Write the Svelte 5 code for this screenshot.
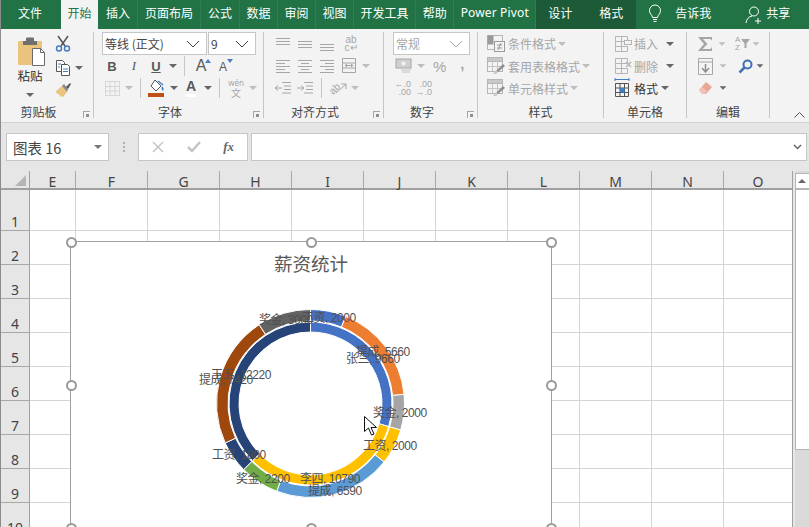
<script>
  const tabs = ["插入", "页面布局", "公式", "数据", "审阅", "视图", "开发工具", "帮助", "Power Pivot"];
  const cols = [["E", 46], ["F", 72], ["G", 72], ["H", 72], ["I", 72], ["J", 72], ["K", 72], ["L", 72], ["M", 72], ["N", 72], ["O", 68]];
  const rows = [41, 34, 34, 34, 34, 34, 34, 34, 34, 34];

  const total = 32670;
  const inner = [
    [9660, "#4472c4"],
    [10790, "#ffc000"],
    [12220, "#264478"],
  ];
  const outer = [
    [2000, "#4472c4"],
    [5660, "#ed7d31"],
    [2000, "#a5a5a5"],
    [2000, "#ffc000"],
    [6590, "#5b9bd5"],
    [2200, "#70ad47"],
    [1800, "#264478"],
    [7420, "#9e480e"],
    [3000, "#636363"],
  ];
  const labels = [
    ["工资, 2000", 231, 75],
    ["奖金, 3000", 188, 77],
    ["提成, 5660", 285, 109],
    ["张三, 9660", 275, 116],
    ["王五, 12220", 140, 132],
    ["提成, 7420", 128, 137],
    ["奖金, 2000", 302, 170],
    ["工资, 2000", 292, 203],
    ["工资, 1800", 141, 212],
    ["奖金, 2200", 165, 236],
    ["李四, 10790", 229, 236],
    ["提成, 6590", 237, 248],
  ];
  const cx = 239.5;
  const cy = 161.5;

  function point(r, a) {
    const t = (a / total) * Math.PI * 2;
    return (cx + r * Math.sin(t)).toFixed(2) + " " + (cy - r * Math.cos(t)).toFixed(2);
  }

  function ring(data, r0, r1) {
    let sum = 0;
    return data.map(([v, color]) => {
      const a0 = sum;
      sum += v;
      const big = v / total > 0.5 ? 1 : 0;
      const d = `M${point(r1, a0)}A${r1} ${r1} 0 ${big} 1 ${point(r1, sum)}L${point(r0, sum)}A${r0} ${r0} 0 ${big} 0 ${point(r0, a0)}Z`;
      return { d, color };
    });
  }

  const arcs = [...ring(inner, 71.5, 81.5), ...ring(outer, 82.5, 94)];
  const handles = [[0, 0], [50, 0], [100, 0], [0, 50], [100, 50], [0, 100], [50, 100], [100, 100]];

  const topAlign = [[1, 15, 2], [1, 15, 5], [1, 15, 8]];
  const midAlign = [[1, 15, 5], [1, 15, 8], [1, 15, 11]];
  const botAlign = [[1, 15, 8], [1, 15, 11], [1, 15, 14]];
  const leftAlign = [[1, 15, 2], [1, 10, 5], [1, 15, 8], [1, 10, 11], [1, 15, 14]];
  const centerAlign = [[1, 15, 2], [4, 12, 5], [1, 15, 8], [4, 12, 11], [1, 15, 14]];
  const rightAlign = [[1, 15, 2], [6, 15, 5], [1, 15, 8], [6, 15, 11], [1, 15, 14]];
</script>

{#snippet lines(items)}
  <svg class="ico" width="16" height="16" viewBox="0 0 16 16">
    {#each items as [x1, x2, y]}
      <line {x1} {x2} y1={y + 0.5} y2={y + 0.5} stroke="#a6a6a6" />
    {/each}
  </svg>
{/snippet}

{#snippet tableBrush()}
  <svg class="ico" width="20" height="20" viewBox="0 0 20 20">
    <rect x="1.500" y="1.500" width="15" height="14" fill="#f3f3f3" stroke="#b5b5b5" />
    <rect x="1.500" y="1.500" width="15" height="4" fill="#c8c8c8" stroke="#b5b5b5" />
    <path d="M6.500 2v13M11.500 2v13M2 10.500h14" stroke="#c4c4c4" fill="none" />
    <path d="M10 15l7-7 2 2-7 6z" fill="#8f8f8f" />
    <path d="M7 18l3-4 2 2-2 2z" fill="#c9c9c9" />
  </svg>
{/snippet}

{#snippet cellsIcon(kind)}
  <svg class="ico" width="20" height="20" viewBox="0 0 20 20">
    <path d="M1.500 2.500h6v5h-6zM7.500 2.500h6v5h-6zM1.500 7.500h6v5h-6zM1.500 12.500h6v5h-6zM7.500 12.500h6v5h-6z" fill="#f3f3f3" stroke="#b5b5b5" />
    {#if kind === "add"}
      <rect x="10.500" y="6.500" width="7" height="4" fill="#f3f3f3" stroke="#b5b5b5" />
    {:else}
      <path d="M12 6l5 5M17 6l-5 5" stroke="#b5b5b5" stroke-width="1.500" />
    {/if}
  </svg>
{/snippet}

<div class="window">
  <header class="tabbar">
    <div class="tab file">文件</div>
    <div class="tab active">开始</div>
    {#each tabs as t}
      <div class="tab" class:latin={t === "Power Pivot"}>{t}</div>
    {/each}
    <div class="tool-tabs">
      <div class="tool-tab">设计</div>
      <div class="tool-tab">格式</div>
    </div>
    <svg class="bulb" width="14" height="20" viewBox="0 0 14 20" fill="none" stroke="#fff">
      <path d="M4.500 13.500C4 10.500 1.500 10 1.500 6.500a5.500 5.500 0 0 1 11 0c0 3.500-2.500 4-3 7z" />
      <path d="M5 15.500h4M5.500 17.500h3" />
    </svg>
    <div class="tell">告诉我</div>
    <svg class="user" width="18" height="20" viewBox="0 0 18 20" fill="none" stroke="#fff">
      <circle cx="9" cy="6.500" r="4.500" />
      <path d="M1 18c.5-4 3-6.500 6-7M13 13v6M10 16h6" />
    </svg>
    <div class="share">共享</div>
  </header>

  <section class="ribbon">
    <div class="group clip">
      <div class="body clip-body">
        <div class="paste">
          <svg class="board" width="30" height="31" viewBox="0 0 30 31">
            <rect x="1" y="5" width="24" height="24" rx="1" fill="#eac47d" />
            <path d="M6 9V5h3V2.500a1 1 0 0 1 1-1h6a1 1 0 0 1 1 1V5h3v4z" fill="#6f6f6f" />
            <path d="M15.500 12.500h8l4 4v13h-12z" fill="#fff" stroke="#6a6a6a" />
            <path d="M23.500 12.500v4h4" fill="none" stroke="#6a6a6a" />
          </svg>
          <span class="paste-label">粘贴</span>
          <i class="caret"></i>
        </div>
        <div class="clip-tools">
          <svg width="16" height="17" viewBox="0 0 16 17" fill="none">
            <path d="M3 1l7 10M13 1L6 11" stroke="#555" stroke-width="1.500" />
            <circle cx="4" cy="13.500" r="2.500" stroke="#4a7ebb" stroke-width="1.500" />
            <circle cx="12" cy="13.500" r="2.500" stroke="#4a7ebb" stroke-width="1.500" />
          </svg>
          <div class="with-caret">
            <svg width="16" height="17" viewBox="0 0 16 17" fill="#fff" stroke="#555">
              <path d="M1.500 1.500h6l2 2v9h-8z" />
              <path d="M6.500 5.500h6l2 2v9h-8z" />
              <path d="M3 5h3M3 8h2M8 10h5M8 12.500h5" stroke="#4a7ebb" fill="none" />
            </svg>
            <i class="caret"></i>
          </div>
          <svg width="17" height="16" viewBox="0 0 17 16">
            <path d="M1 9l6-5 5 6-4 5-3-1-1-2-2 0z" fill="#eac47d" />
            <path d="M7 4l2-2 4 5-1 3z" fill="#8a8a8a" />
            <path d="M11 5l4-4 1 1-3 5z" fill="#555" />
          </svg>
        </div>
      </div>
      <div class="group-label"><span>剪贴板</span><i class="launcher"></i></div>
    </div>

    <div class="group font">
      <div class="body">
        <div class="selects">
          <div class="select wide">
            <span>等线 (正文)</span>
            <svg class="chev" width="14" height="8" viewBox="0 0 14 8" fill="none" stroke="#444"><path d="M1 1l6 6 6-6" /></svg>
          </div>
          <div class="select size">
            <span>9</span>
            <svg class="chev" width="14" height="8" viewBox="0 0 14 8" fill="none" stroke="#444"><path d="M1 1l6 6 6-6" /></svg>
          </div>
        </div>
        <div class="rowline tight">
          <div class="cell"><b class="fmt">B</b></div>
          <div class="cell"><em class="fmt">I</em></div>
          <div class="cell"><span class="fmt under">U</span></div>
          <div class="cell sm"><i class="caret"></i></div>
          <div class="sep"></div>
          <div class="cell grow"><span class="big-a">A</span><i class="up"></i></div>
          <div class="cell grow"><span class="small-a">A</span><i class="down"></i></div>
        </div>
        <div class="rowline tight">
          <div class="cell">
            <svg width="15" height="15" viewBox="0 0 15 15" fill="none" stroke="#bdbdbd" stroke-dasharray="1 1"><path d="M.5.500h14v14H.500zM.500 5.500h14M.500 10h14M5 .500v14M10 .500v14" /></svg>
          </div>
          <div class="cell sm"><i class="caret off"></i></div>
          <div class="sep"></div>
          <div class="cell">
            <svg width="18" height="18" viewBox="0 0 18 18">
              <path d="M7 1l6 6-5 5-5-5z" fill="#fff" stroke="#555" />
              <path d="M14 7c2 2 2 4 1 4.500S13 10 14 7z" fill="#3f7fc4" />
              <path d="M10 2l5 4" stroke="#3f7fc4" stroke-width="1.500" />
              <rect y="14" width="16" height="4" fill="#c04f15" />
            </svg>
          </div>
          <div class="cell sm"><i class="caret"></i></div>
          <div class="cell letter">
            <span>A</span>
          </div>
          <div class="cell sm"><i class="caret"></i></div>
          <div class="sep"></div>
          <div class="cell wen"><span>wén</span><span>文</span></div>
          <div class="cell sm"><i class="caret off"></i></div>
        </div>
      </div>
      <div class="group-label"><span>字体</span><i class="launcher"></i></div>
    </div>

    <div class="group align">
      <div class="body">
        <div class="rowline first">
          <div class="cell">{@render lines(topAlign)}</div>
          <div class="cell">{@render lines(midAlign)}</div>
          <div class="cell">{@render lines(botAlign)}</div>
          <div class="cell wrap"><span>ab</span><span>c↵</span></div>
        </div>
        <div class="rowline">
          <div class="cell">{@render lines(leftAlign)}</div>
          <div class="cell">{@render lines(centerAlign)}</div>
          <div class="cell">{@render lines(rightAlign)}</div>
          <div class="cell">
            <svg width="16" height="16" viewBox="0 0 16 16" fill="none" stroke="#a6a6a6"><path d="M1.500.500h13v14h-13zM1.500 5h13M1.500 10h13M4 7.500h8M4 7.500l2-1.500M4 7.500L6 9M12 7.500L10 6M12 7.500L10 9" /></svg>
          </div>
          <div class="cell sm"><i class="caret off"></i></div>
        </div>
        <div class="rowline">
          <div class="cell">
            <svg width="18" height="14" viewBox="0 0 18 14" fill="none" stroke="#a6a6a6"><path d="M8 1.500h9M10 5h7M10 8.500h7M8 12h9M8 7H1M1 7l3-2.500M1 7l3 2.500" /></svg>
          </div>
          <div class="cell">
            <svg width="18" height="14" viewBox="0 0 18 14" fill="none" stroke="#a6a6a6"><path d="M8 1.500h9M10 5h7M10 8.500h7M8 12h9M1 7h7M8 7L5 4.500M8 7L5 9.500" /></svg>
          </div>
          <div class="sep"></div>
          <div class="cell orient">
            <span>ab</span>
            <svg width="12" height="12" viewBox="0 0 12 12" fill="none" stroke="#a6a6a6"><path d="M1 11L11 2M6 2h5v5" /></svg>
          </div>
          <div class="cell sm"><i class="caret off"></i></div>
        </div>
      </div>
      <div class="group-label"><span>对齐方式</span><i class="launcher"></i></div>
    </div>

    <div class="group number">
      <div class="body">
        <div class="selects">
          <div class="select format">
            <span>常规</span>
            <svg class="chev" width="14" height="8" viewBox="0 0 14 8" fill="none" stroke="#a6a6a6"><path d="M1 1l6 6 6-6" /></svg>
          </div>
        </div>
        <div class="rowline">
          <div class="cell money">
            <svg width="18" height="16" viewBox="0 0 18 16">
              <rect x="1" y="1" width="15" height="9" fill="#d0d0d0" stroke="#a6a6a6" />
              <circle cx="8.500" cy="5.500" r="2" fill="#f3f3f3" />
              <path d="M6 12h10M7 14h8" stroke="#c4c4c4" />
            </svg>
          </div>
          <div class="cell sm"><i class="caret off"></i></div>
          <span class="pct">%</span>
          <span class="comma">,</span>
        </div>
        <div class="rowline decimals">
          <div class="dec"><span>←.0</span><span>.00</span></div>
          <div class="dec"><span>.00</span><span>→.0</span></div>
        </div>
      </div>
      <div class="group-label"><span>数字</span><i class="launcher"></i></div>
    </div>

    <div class="group styles">
      <div class="body">
        <div class="cmd first">
          <svg class="ico" width="20" height="20" viewBox="0 0 20 20">
            <rect x="1.500" y="1.500" width="15" height="14" fill="#f3f3f3" stroke="#b5b5b5" />
            <rect x="1.500" y="1.500" width="6" height="9" fill="#9a9a9a" />
            <rect x="8.500" y="7.500" width="10" height="10" fill="#f3f3f3" stroke="#9a9a9a" />
            <path d="M11 11h5M11 14h5M15 9l-3 7" stroke="#9a9a9a" />
          </svg>
          <span class="off-text">条件格式</span><i class="caret off"></i>
        </div>
        <div class="cmd">{@render tableBrush()}<span class="off-text">套用表格格式</span><i class="caret off"></i></div>
        <div class="cmd">{@render tableBrush()}<span class="off-text">单元格样式</span><i class="caret off"></i></div>
      </div>
      <div class="group-label"><span>样式</span></div>
    </div>

    <div class="group cells">
      <div class="body">
        <div class="cmd first">{@render cellsIcon("add")}<span class="off-text">插入</span><i class="caret push"></i></div>
        <div class="cmd">{@render cellsIcon("del")}<span class="off-text">删除</span><i class="caret push"></i></div>
        <div class="cmd">
          <svg class="ico" width="20" height="20" viewBox="0 0 20 20">
            <path d="M1 1.500h14M1 0v3M15 0v3" stroke="#3f7fc4" fill="none" />
            <path d="M1.500 5.500h13v13h-13zM1.500 10h13M1.500 14.500h13M6 5.500v13M10.500 5.500v13" fill="none" stroke="#555" />
            <rect x="6" y="10" width="4.500" height="4.500" fill="#3f7fc4" />
          </svg>
          <span class="on-text">格式</span><i class="caret"></i>
        </div>
      </div>
      <div class="group-label"><span>单元格</span></div>
    </div>

    <div class="group edit">
      <div class="body">
        <div class="rowline first">
          <svg class="sigma" width="15" height="14" viewBox="0 0 15 14"><path d="M0 0h14v3.500L12.500 2H5l4.500 5-5 5h8L14 10v4H0l6-7z" fill="#a6a6a6" /></svg>
          <i class="caret off"></i>
          <div class="sort"><span>A</span><span>Z</span></div>
          <svg width="9" height="9" viewBox="0 0 9 9"><path d="M0 0h9L5.500 4.500V9h-2V4.500z" fill="#a6a6a6" /></svg>
          <i class="caret off"></i>
        </div>
        <div class="rowline">
          <svg class="fill-down" width="15" height="17" viewBox="0 0 15 17" fill="none" stroke="#a6a6a6">
            <path d="M.500.500h14v16H.500zM.500 4h14" />
            <path d="M7.500 6v8M4 10l3.500 4 3.500-4" stroke-width="1.500" stroke="#8f8f8f" />
          </svg>
          <i class="caret off"></i>
          <svg class="lens" width="15" height="15" viewBox="0 0 15 15" fill="none">
            <circle cx="9.500" cy="5.500" r="4" stroke="#3f6fb5" stroke-width="2" />
            <path d="M6.500 8.500L1.500 13.500" stroke="#3f6fb5" stroke-width="2.500" />
          </svg>
          <i class="caret"></i>
        </div>
        <div class="rowline">
          <svg class="eraser" width="15" height="14" viewBox="0 0 15 14">
            <path d="M1 9l7-8 6 5-6 7H4z" fill="#e9a793" />
            <path d="M1 9l3-3 5 4-2 3H4z" fill="#eec3b6" />
          </svg>
          <i class="caret"></i>
        </div>
      </div>
      <div class="group-label"><span>编辑</span></div>
    </div>

    <svg class="collapse" width="11" height="6" viewBox="0 0 11 6" fill="none" stroke="#555"><path d="M.500 5.500l5-5 5 5" /></svg>
  </section>

  <section class="formula">
    <div class="namebox">
      <span>图表 16</span>
      <i class="caret name-caret"></i>
    </div>
    <div class="dots"></div>
    <div class="fx-box">
      <svg width="12" height="12" viewBox="0 0 12 12" fill="none" stroke="#c4c4c4" stroke-width="1.500"><path d="M1 1l10 10M11 1L1 11" /></svg>
      <svg width="14" height="12" viewBox="0 0 14 12" fill="none" stroke="#c4c4c4" stroke-width="2.500"><path d="M1 6l4 4 8-9" /></svg>
      <em>fx</em>
    </div>
    <div class="bar">
      <svg width="9" height="6" viewBox="0 0 9 6" fill="none" stroke="#666" stroke-width="1.500"><path d="M1 1l3.500 3.500L8 1" /></svg>
    </div>
  </section>

  <section class="sheet">
    <div class="table">
      <div class="head">
        <div class="corner"><i></i></div>
        {#each cols as [name, w]}
          <div class="col" style="width:{w}px">{name}</div>
        {/each}
      </div>
      {#each rows as h, i}
        <div class="row" style="height:{h}px">
          <div class="rownum">{i + 1}</div>
          {#each cols as [name, w]}
            <div class="c" style="width:{w}px"></div>
          {/each}
        </div>
      {/each}
    </div>

    <div class="vscroll">
      <div class="up-btn"><i></i></div>
      <div class="thumb"></div>
    </div>

    <div class="chart">
      <div class="title">薪资统计</div>
      <svg class="plot" width="480" height="286" viewBox="0 0 480 286">
        {#each arcs as a}
          <path d={a.d} fill={a.color} stroke="#fff" stroke-width="1" />
        {/each}
        {#each labels as [text, x, y]}
          <text {x} y={y + 4.5}>{text}</text>
        {/each}
      </svg>
      {#each handles as [x, y]}
        <i class="handle" style="left:{x}%;top:{y}%"></i>
      {/each}
    </div>

    <svg class="cursor" width="14" height="20" viewBox="0 0 14 20">
      <path d="M.500.500v15l4-3.500 3 7 2.500-1-3-6.500h5.500z" fill="#fff" stroke="#111" />
    </svg>
  </section>
</div>

<style>
  :global(body) {
    margin: 0;
    overflow: hidden;
  }

  .window {
    width: 809px;
    height: 527px;
    box-sizing: border-box;
    border-left: 1px solid #8c8c8c;
    background: #e6e6e6;
    display: flex;
    flex-direction: column;
    overflow: hidden;
    font-family: "Noto Sans CJK SC", sans-serif;
    font-size: 12px;
    color: #444;
  }

  i {
    display: block;
    font-style: normal;
  }

  .tabbar {
    height: 29px;
    flex: none;
    background: #217346;
    color: #fff;
    display: flex;
    align-items: stretch;
    line-height: 26px;
  }
  .tab {
    padding: 0 6.500px;
    border-right: 1px solid #2f7d52;
  }
  .tab:nth-child(3),
  .tab:nth-child(4),
  .tab:nth-child(5) {
    padding: 0 7px;
  }
  .tab.file {
    padding: 0 19px 0 17px;
    border-right: 0;
  }
  .tab.active {
    width: 37px;
    box-sizing: border-box;
    padding: 0 6.500px;
    margin-right: 1px;
    border-right: 0;
    background: #f3f3f3;
    color: #217346;
  }
  .tab.latin {
    font-family: "Noto Sans", sans-serif;
    letter-spacing: 0.15px;
    width: 68px;
    white-space: nowrap;
  }
  .tool-tabs {
    width: 100px;
    display: flex;
    background: #1d5b38;
    justify-content: space-between;
    padding: 0 13px 0 12px;
    box-sizing: border-box;
  }
  .bulb {
    margin: 4px 0 0 12px;
  }
  .tell {
    margin-left: 13px;
  }
  .user {
    margin: 5px 0 0 34px;
  }
  .share {
    margin-left: 3px;
  }

  .ribbon {
    height: 94px;
    flex: none;
    box-sizing: border-box;
    background: #f3f3f3;
    border-bottom: 1px solid #d2d2d2;
    padding-top: 3px;
    display: flex;
    align-items: flex-start;
  }
  .group {
    height: 86px;
    box-sizing: border-box;
    border-right: 1px solid #c6c6c6;
    display: flex;
    flex-direction: column;
    flex: none;
  }
  .clip { width: 93px; }
  .font { width: 170px; }
  .align { width: 120px; }
  .number { width: 94px; }
  .styles { width: 126px; }
  .cells { width: 83px; }
  .edit { width: 83px; }

  .body {
    flex: 1;
  }
  .font .body { padding-left: 8px; }
  .align .body { padding-left: 8px; }
  .number .body { padding-left: 9px; }
  .styles .body { padding-left: 8px; }
  .cells .body { padding-left: 10px; }
  .edit .body { padding-left: 11px; }

  .group-label {
    height: 12px;
    line-height: 12px;
    display: flex;
    align-items: center;
    color: #444;
  }
  .group-label span {
    flex: 1;
    text-align: center;
  }
  .launcher {
    width: 7px;
    height: 7px;
    margin: 4px 3px 0 7px;
    box-sizing: border-box;
    border-left: 1px solid #a6a6a6;
    border-top: 1px solid #a6a6a6;
    position: relative;
  }
  .launcher::after {
    content: "";
    display: block;
    width: 3px;
    height: 3px;
    margin: 2px 0 0 2px;
    background: #8f8f8f;
  }

  .caret {
    width: 0;
    height: 0;
    flex: none;
    border-left: 4px solid transparent;
    border-right: 4px solid transparent;
    border-top: 4px solid #666;
  }
  .caret.off {
    border-top-color: #bdbdbd;
  }

  .clip-body {
    display: flex;
    padding-left: 10px;
  }
  .paste {
    width: 38px;
    display: flex;
    flex-direction: column;
    align-items: center;
    padding-top: 4px;
  }
  .board {
    margin-left: 4px;
  }
  .paste-label {
    font-size: 12.500px;
    line-height: 16px;
    margin: 1px 0 9px;
    color: #333;
  }
  .clip-tools {
    margin: 3px 0 0 6px;
    display: flex;
    flex-direction: column;
    gap: 6px;
  }
  .with-caret {
    display: flex;
    align-items: center;
    gap: 4px;
    width: 30px;
    margin-top: 1px;
  }

  .selects {
    display: flex;
    height: 23px;
    gap: 1px;
  }
  .select {
    box-sizing: border-box;
    background: #fff;
    border: 1px solid #c6c6c6;
    display: flex;
    align-items: center;
    justify-content: space-between;
    padding: 0 3px 0 2px;
  }
  .wide { width: 105px; }
  .size { width: 48px; }
  .format { width: 77px; color: #a6a6a6; }
  .chev {
    margin-right: 3px;
  }

  .rowline {
    display: flex;
    align-items: center;
    height: 22px;
  }
  .rowline.first {
    height: 23px;
  }
  .rowline.tight {
    margin-left: -1px;
  }
  .cell {
    width: 22px;
    height: 22px;
    flex: none;
    display: flex;
    align-items: center;
    justify-content: center;
    position: relative;
  }
  .cell.sm {
    width: 12px;
  }
  .ico {
    flex: none;
  }
  .sep {
    width: 1px;
    height: 20px;
    margin: 0 5px;
    background: #c6c6c6;
    flex: none;
  }
  .fmt {
    font-family: "Liberation Sans", sans-serif;
    font-size: 13px;
    color: #595959;
    font-style: normal;
  }
  em.fmt {
    font-family: "Liberation Serif", serif;
    font-style: italic;
  }
  .under {
    text-decoration: underline;
    font-weight: bold;
  }
  .big-a,
  .small-a,
  .letter {
    font-family: "Liberation Sans", sans-serif;
    color: #595959;
  }
  .big-a { font-size: 16px; }
  .small-a { font-size: 12px; margin-top: 2px; }
  .letter {
    font-size: 14px;
    font-weight: bold;
    width: 22px;
  }
  .letter span {
    border-bottom: 3px solid #fff;
    line-height: 15px;
  }
  .up,
  .down {
    width: 0;
    height: 0;
    position: absolute;
    top: 4px;
    right: 1px;
    border-left: 3px solid transparent;
    border-right: 3px solid transparent;
  }
  .up { border-bottom: 4px solid #4a7ebb; }
  .down { border-top: 4px solid #4a7ebb; }

  .wen {
    flex-direction: column;
    font-size: 8px;
    line-height: 10px;
    color: #a6a6a6;
    font-family: "Noto Sans", sans-serif;
  }
  .wen span + span {
    font-family: "Noto Sans CJK SC", sans-serif;
    font-size: 10px;
  }
  .wrap {
    flex-direction: column;
    font-size: 10px;
    line-height: 8px;
    font-family: "Liberation Sans", sans-serif;
    color: #a6a6a6;
    margin-left: 2px;
  }
  .orient {
    color: #a6a6a6;
    font-family: "Liberation Sans", sans-serif;
    font-size: 10px;
  }
  .orient span {
    transform: rotate(-45deg);
    margin-right: -6px;
  }

  .pct {
    font-family: "Liberation Sans", sans-serif;
    font-size: 15px;
    color: #a6a6a6;
    margin-left: 6px;
  }
  .comma {
    font-family: "Liberation Sans", sans-serif;
    font-weight: bold;
    font-size: 15px;
    color: #a6a6a6;
    margin: -6px 0 0 14px;
  }
  .decimals {
    gap: 6px;
    padding-left: 3px;
  }
  .dec {
    display: flex;
    flex-direction: column;
    align-items: flex-end;
    width: 15px;
    font-family: "Liberation Sans", sans-serif;
    font-size: 9px;
    line-height: 8px;
    color: #a6a6a6;
  }

  .cmd {
    height: 22px;
    display: flex;
    align-items: center;
    gap: 2px;
  }
  .cmd.first {
    height: 23px;
  }
  .cells .cmd {
    gap: 0;
  }
  .off-text {
    color: #a6a6a6;
    white-space: nowrap;
  }
  .on-text {
    color: #333;
  }
  .on-text + .caret {
    margin-left: 3px;
  }
  .push {
    margin-left: 8px;
  }

  .sigma {
    margin-right: 3px;
  }
  .sort {
    display: flex;
    flex-direction: column;
    font-family: "Liberation Sans", sans-serif;
    font-size: 8px;
    line-height: 8px;
    color: #a6a6a6;
    margin: 0 1px 0 9px;
  }
  .edit .caret {
    margin-left: 2px;
    transform: scale(0.85);
  }
  .fill-down {
    margin-right: 4px;
  }
  .lens {
    margin-left: 11px;
    margin-right: 1px;
  }
  .eraser {
    margin-right: 4px;
  }
  .collapse {
    align-self: flex-end;
    margin: 0 0 4px 24px;
  }

  .formula {
    height: 48px;
    flex: none;
    box-sizing: border-box;
    padding: 10px 1px 10px 5px;
    display: flex;
    align-items: stretch;
  }
  .namebox,
  .fx-box,
  .bar {
    box-sizing: border-box;
    background: #fff;
    border: 1px solid #c6c6c6;
  }
  .namebox {
    width: 103px;
    display: flex;
    align-items: center;
    justify-content: space-between;
    padding: 0 6px 0 6px;
    font-size: 14.500px;
  }
  .name-caret {
    border-top-color: #777;
  }
  .dots {
    width: 2px;
    height: 10px;
    align-self: center;
    margin: 0 13.500px 0 13.500px;
    background: repeating-linear-gradient(#b0b0b0 0 2px, transparent 2px 4px);
  }
  .fx-box {
    width: 110px;
    display: flex;
    align-items: center;
    justify-content: space-between;
    padding: 0 13px;
    color: #666;
  }
  .fx-box em {
    font-family: "Liberation Serif", serif;
    font-weight: bold;
    font-size: 13px;
  }
  .bar {
    width: 556px;
    margin-left: 3px;
    display: flex;
    align-items: center;
    justify-content: flex-end;
    padding-right: 4px;
  }

  .sheet {
    flex: 1;
    display: flex;
    position: relative;
    min-height: 0;
    overflow: hidden;
  }
  .table {
    width: 791px;
    flex: none;
    border-right: 1.500px solid #a0a0a0;
  }
  .head {
    height: 19px;
    box-sizing: border-box;
    display: flex;
    border-bottom: 2px solid #a0a0a0;
  }
  .corner {
    width: 29px;
    flex: none;
    box-sizing: border-box;
    border-right: 1px solid #a0a0a0;
    position: relative;
  }
  .corner i {
    position: absolute;
    right: 3px;
    top: 4px;
    width: 0;
    height: 0;
    border-left: 11px solid transparent;
    border-bottom: 11px solid #b5b5b5;
  }
  .col {
    flex: none;
    box-sizing: border-box;
    border-right: 1px solid #a8a8a8;
    text-align: center;
    font-family: "Noto Sans", sans-serif;
    font-size: 14px;
    line-height: 21px;
    color: #444;
  }
  .col:last-child {
    border-right: 0;
  }
  .row {
    display: flex;
    box-sizing: border-box;
  }
  .rownum {
    width: 29px;
    flex: none;
    box-sizing: border-box;
    border-right: 1px solid #a0a0a0;
    border-bottom: 1px solid #a8a8a8;
    font-family: "Noto Sans", sans-serif;
    font-size: 14px;
    display: flex;
    align-items: flex-end;
    justify-content: center;
    line-height: 17px;
    color: #444;
  }
  .c {
    flex: none;
    box-sizing: border-box;
    background: #fff;
    border-right: 1px solid #d4d4d4;
    border-bottom: 1px solid #d4d4d4;
  }
  .c:last-child {
    border-right: 0;
  }

  .vscroll {
    width: 14px;
    margin-left: 1.500px;
    background: #dadada;
    flex: none;
    display: flex;
    flex-direction: column;
  }
  .up-btn {
    height: 17px;
    margin-top: 2px;
    box-sizing: border-box;
    background: #fff;
    border: 1px solid #b5b5b5;
    border-bottom-width: 2px;
    border-right: 0;
    display: flex;
    align-items: center;
    justify-content: center;
  }
  .up-btn i {
    width: 0;
    height: 0;
    border-left: 4px solid transparent;
    border-right: 4px solid transparent;
    border-bottom: 4px solid #666;
  }
  .thumb {
    height: 260px;
    box-sizing: border-box;
    background: #fff;
    border: 1px solid #b5b5b5;
    border-top: 0;
    border-right: 0;
  }

  .chart {
    position: absolute;
    left: 70px;
    top: 71px;
    width: 480px;
    height: 286px;
    box-sizing: border-box;
    background: #fff;
    outline: 1.500px solid #a0a0a0;
  }
  .title {
    text-align: center;
    font-size: 18.500px;
    line-height: 24px;
    padding-top: 9px;
    color: #595959;
  }
  .plot {
    position: absolute;
    left: 0;
    top: 0;
  }
  .plot text {
    font-family: "Liberation Sans", "Noto Sans CJK SC", sans-serif;
    font-size: 12px;
    letter-spacing: -0.45px;
    fill: #505050;
  }
  .handle {
    position: absolute;
    width: 11px;
    height: 11px;
    margin: -5.500px 0 0 -5.500px;
    box-sizing: border-box;
    border: 2px solid #9a9a9a;
    border-radius: 50%;
    background: #fff;
  }
  .cursor {
    position: absolute;
    left: 363px;
    top: 245px;
  }
</style>
